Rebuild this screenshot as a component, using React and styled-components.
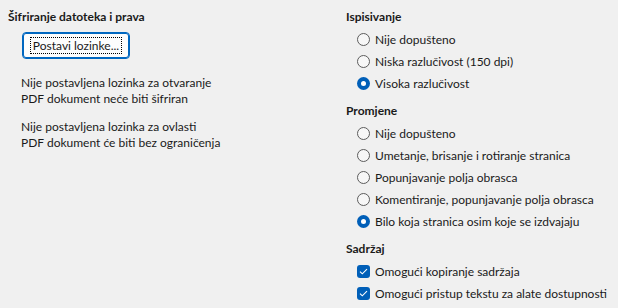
import styled, { createGlobalStyle } from "styled-components";

const Global = createGlobalStyle`
body{
    margin: 0;
    background: #f0f0f0;
    font-family: "Lato", "Liberation Sans", sans-serif;
    font-size: 12px;
    color: #1a1a1a;
}
`
const Page = styled.div`
display: flex;
padding-top: 6px;
white-space: nowrap;
`
const LeftCol = styled.div`
flex: none;
padding-left: 8px;
box-sizing: border-box;
width: 346px;
display: flex;
flex-direction: column;
align-items: flex-start;
`
const RightCol = styled.div`
flex: 1;
display: flex;
flex-direction: column;
gap: 6px;
`
const Heading = styled.div`
font-weight: 700;
line-height: 22px;
height: 22px;
`
const Button = styled.button`
margin: 4px 0 0 14px;
width: 108px;
height: 27px;
background: #fdfdfd;
border: 1px solid #0067c0;
box-shadow: inset 0 0 0 1px #0067c0;
border-radius: 4px;
font: inherit;
color: #1a1a1a;
padding: 0;
display: flex;
align-items: center;
justify-content: center;
span{
    outline: 1px dotted #000;
    padding: 0 2px;
    line-height: 15px;
}
`
const Note = styled.p`
margin: ${p => p.$first ? "16px" : "12px"} 0 0 13px;
line-height: 16px;
`
const Group = styled.div`
display: flex;
flex-direction: column;
`
const Row = styled.label`
display: flex;
align-items: center;
height: 22px;
padding-left: 11px;
gap: 5px;
`
const Radio = styled.span`
width: 13px;
height: 13px;
box-sizing: border-box;
border-radius: 50%;
flex: none;
border: ${p => p.$on ? "none" : "1px solid #5c5c5c"};
background: ${p => p.$on ? "#005fb8" : "#f7f7f7"};
display: flex;
align-items: center;
justify-content: center;
&::after{
    content: "";
    display: ${p => p.$on ? "block" : "none"};
    width: 5px;
    height: 5px;
    border-radius: 50%;
    background: #fff;
}
`
const Check = styled.span`
width: 13px;
height: 13px;
border-radius: 3px;
background: #005fb8;
flex: none;
display: flex;
align-items: center;
justify-content: center;
`

function Option({ checked, children }) {
    return (
        <Row>
            <Radio $on={checked} />
            {children}
        </Row>
    );
}

function CheckOption({ children }) {
    return (
        <Row>
            <Check>
                <svg width="9" height="7" viewBox="0 0 9 7">
                    <path d="M1 3.6 L3.3 5.8 L8 1.2" fill="none" stroke="#fff" strokeWidth="1.1" />
                </svg>
            </Check>
            {children}
        </Row>
    );
}

export default function App() {
    return (
        <>
            <Global />
            <Page>
                <LeftCol>
                    <Heading>Šifriranje datoteka i prava</Heading>
                    <Button><span>Postavi lozinke...</span></Button>
                    <Note $first>
                        Nije postavljena lozinka za otvaranje<br />
                        PDF dokument neće biti šifriran
                    </Note>
                    <Note>
                        Nije postavljena lozinka za ovlasti<br />
                        PDF dokument će biti bez ograničenja
                    </Note>
                </LeftCol>
                <RightCol>
                    <Group>
                        <Heading>Ispisivanje</Heading>
                        <Option>Nije dopušteno</Option>
                        <Option>Niska razlučivost (150 dpi)</Option>
                        <Option checked>Visoka razlučivost</Option>
                    </Group>
                    <Group>
                        <Heading>Promjene</Heading>
                        <Option>Nije dopušteno</Option>
                        <Option>Umetanje, brisanje i rotiranje stranica</Option>
                        <Option>Popunjavanje polja obrasca</Option>
                        <Option>Komentiranje, popunjavanje polja obrasca</Option>
                        <Option checked>Bilo koja stranica osim koje se izdvajaju</Option>
                    </Group>
                    <Group>
                        <Heading>Sadržaj</Heading>
                        <CheckOption>Omogući kopiranje sadržaja</CheckOption>
                        <CheckOption>Omogući pristup tekstu za alate dostupnosti</CheckOption>
                    </Group>
                </RightCol>
            </Page>
        </>
    );
}
